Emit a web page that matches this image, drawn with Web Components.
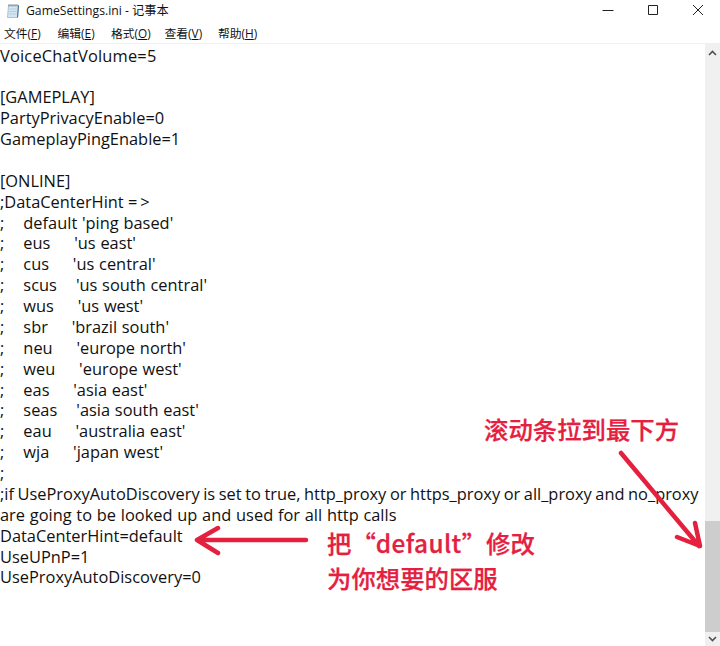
<!DOCTYPE html>
<html>
<head>
<meta charset="utf-8">
<style>
  html, body { margin: 0; height: 100%; background: #fff; overflow: hidden; }
  .row { word-spacing: .5px; }
</style>
</head>
<body>
<notepad-window>
  <ini-line style="letter-spacing:.2px">VoiceChatVolume=5</ini-line>
  <ini-line></ini-line>
  <ini-line>[GAMEPLAY]</ini-line>
  <ini-line>PartyPrivacyEnable=0</ini-line>
  <ini-line>GameplayPingEnable=1</ini-line>
  <ini-line></ini-line>
  <ini-line>[ONLINE]</ini-line>
  <ini-line>;DataCenterHint =<span style="margin-left:3px">&gt;</span></ini-line>
  <ini-line class="row">;    default 'ping based'</ini-line>
  <ini-line class="row">;    eus     'us east'</ini-line>
  <ini-line class="row">;    cus     'us central'</ini-line>
  <ini-line class="row">;    scus    'us south central'</ini-line>
  <ini-line class="row">;    wus     'us west'</ini-line>
  <ini-line class="row">;    sbr     'brazil south'</ini-line>
  <ini-line class="row">;    neu     'europe north'</ini-line>
  <ini-line class="row">;    weu     'europe west'</ini-line>
  <ini-line class="row">;    eas     'asia east'</ini-line>
  <ini-line class="row">;    seas    'asia south east'</ini-line>
  <ini-line class="row">;    eau     'australia east'</ini-line>
  <ini-line class="row">;    wja     'japan west'</ini-line>
  <ini-line>;</ini-line>
  <ini-line style="word-spacing:-.7px">;if UseProxyAutoDiscovery is set to true, http_proxy or https_proxy or all_proxy and no_proxy</ini-line>
  <ini-line style="word-spacing:.5px">are going to be looked up and used for all http calls</ini-line>
  <ini-line>DataCenterHint=default</ini-line>
  <ini-line>UseUPnP=1</ini-line>
  <ini-line>UseProxyAutoDiscovery=0</ini-line>
</notepad-window>
<red-notes></red-notes>

<script>
class NotepadWindow extends HTMLElement {
  constructor() {
    super();
    this.attachShadow({ mode: "open" });
    this.shadowRoot.innerHTML = `
      <style>
        :host { display: flex; flex-direction: column; width: 720px; height: 646px; overflow: hidden;
                font-family: "Open Sans", "Noto Sans CJK SC", sans-serif; color: #111; background: #fff; }
        #title { display: flex; align-items: center; height: 20px; padding-left: 6px; font-size: 12.2px; }
        #title svg { margin-right: 5px; }
        #buttons { margin-left: auto; display: flex; }
        #buttons div { width: 45px; height: 19px; display: flex; align-items: center; justify-content: center; }
        #buttons svg { margin: 0; }
        #menu { display: flex; align-items: center; height: 24px; padding: 2px 0 0 4px; box-sizing: border-box; font-size: 11.8px;
                border-bottom: 1px solid #f0f0f0; }
        #menu span { width: 53.5px; white-space: nowrap; }
        #menu u { text-underline-offset: 1px; }
        #body { flex: 1; display: flex; min-height: 0; }
        #text { flex: 1; min-width: 0; padding-top: 1.6px; }
        #bar { width: 15px; background: #f0f0f0; display: flex; flex-direction: column; }
        #bar .arrow { height: 18px; display: flex; align-items: center; justify-content: center; }
        #bar .arrow.down { height: 14px; }
        #bar .space { flex: 1; }
        #bar .thumb { height: 111px; background: #cdcdcd; }
      </style>
      <div id="title">
        <svg width="15" height="15" viewBox="0 0 15 15">
          <path d="M2.5 2.5h10l-1 12H1.5z" fill="#d3e6f3" stroke="#8fb0c6" stroke-width=".7"/>
          <path d="M12.5 2.5l-1 12" stroke="#4f6f80" stroke-width="1.1"/>
          <path d="M3.6 6h7M3.4 8.5h7M3.2 11h7" stroke="#a5c3d8" stroke-width=".7"/>
          <path d="M3 1v2.5M5 1v2.5M7 1v2.5M9 1v2.5M11 1v2.5" stroke="#6a6a6a" stroke-width=".7"/>
        </svg>
        <span>GameSettings.ini - 记事本</span>
        <div id="buttons">
          <div><svg width="12" height="12" viewBox="0 0 12 12"><path d="M.5 6.5h11" stroke="#222"/></svg></div>
          <div><svg width="12" height="12" viewBox="0 0 12 12"><path d="M1.5 1.5h9v9h-9z" fill="none" stroke="#222"/></svg></div>
          <div><svg width="12" height="12" viewBox="0 0 12 12"><path d="M1 1l10 10M11 1L1 11" stroke="#222"/></svg></div>
        </div>
      </div>
      <div id="menu">
        <span>文件(<u>F</u>)</span><span>编辑(<u>E</u>)</span><span>格式(<u>O</u>)</span><span>查看(<u>V</u>)</span><span>帮助(<u>H</u>)</span>
      </div>
      <div id="body">
        <div id="text"><slot></slot></div>
        <div id="bar">
          <div class="arrow"><svg width="9" height="6" viewBox="0 0 9 6"><path d="M1 5l3.5-3.5L8 5" fill="none" stroke="#505050" stroke-width="1.6"/></svg></div>
          <div class="space"></div>
          <div class="thumb"></div>
          <div class="arrow down"><svg width="9" height="6" viewBox="0 0 9 6"><path d="M1 1l3.5 3.5L8 1" fill="none" stroke="#505050" stroke-width="1.6"/></svg></div>
        </div>
      </div>`;
  }
}
customElements.define("notepad-window", NotepadWindow);

class IniLine extends HTMLElement {
  constructor() {
    super();
    this.attachShadow({ mode: "open" });
    // no whitespace around the slot: white-space: pre would render it
    this.shadowRoot.innerHTML = `<style>
        :host { display: block; height: 20.88px; line-height: 20.88px; font-size: 16.4px; white-space: pre; }
      </style><slot></slot>`;
  }
}
customElements.define("ini-line", IniLine);

class RedNotes extends HTMLElement {
  constructor() {
    super();
    this.attachShadow({ mode: "open" });
    this.shadowRoot.innerHTML = `
      <style>
        :host { position: absolute; left: 0; top: 0; width: 720px; height: 646px; pointer-events: none;
                font-family: "Noto Sans CJK SC", sans-serif; font-weight: 500; font-size: 24.4px; color: #e5203f;
                -webkit-text-stroke: .25px #e5203f; }
        div { position: absolute; white-space: nowrap; line-height: 34px; }
        svg { position: absolute; left: 0; top: 0; }
        i { font-style: normal; letter-spacing: .4px; }
      </style>
      <svg width="720" height="646" viewBox="0 0 720 646" fill="none" stroke="#e5203f" stroke-width="4.5" stroke-linecap="round" stroke-linejoin="round">
        <path d="M621 453L699 546M677 537L700 546L695 523"/>
        <path d="M306 540H198M218 528L197 540L218 553"/>
      </svg>
      <div style="left:484px;top:412px">滚动条拉到最下方</div>
      <div style="left:327px;top:526px">把“<i>default</i>”修改</div>
      <div style="left:327px;top:561px">为你想要的区服</div>`;
  }
}
customElements.define("red-notes", RedNotes);
</script>
</body>
</html>
